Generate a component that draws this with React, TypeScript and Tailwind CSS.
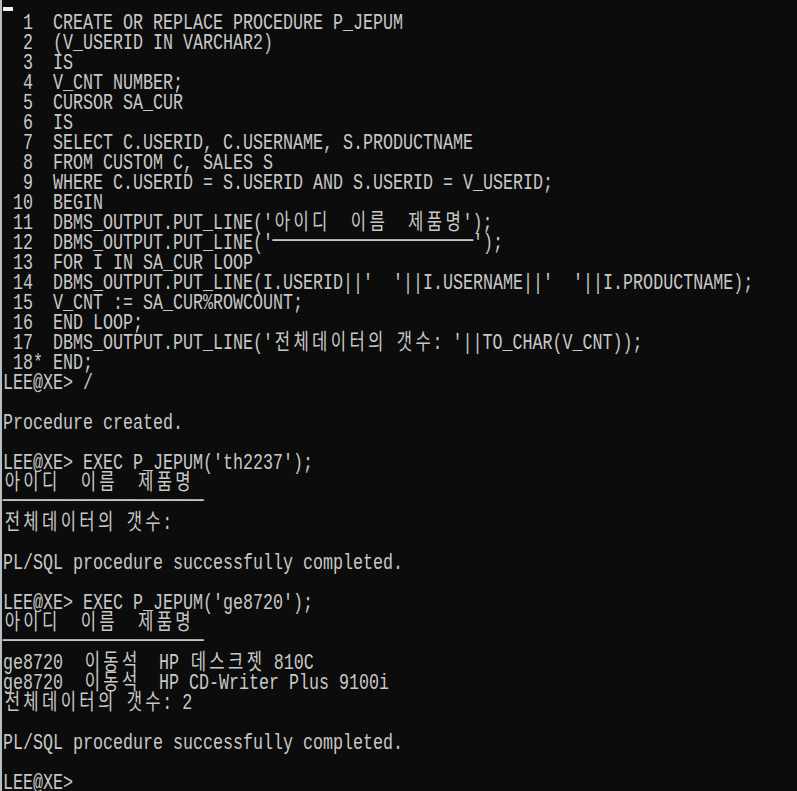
import React from "react";

const LINES: string[] = [
  "  1  CREATE OR REPLACE PROCEDURE P_JEPUM",
  "  2  (V_USERID IN VARCHAR2)",
  "  3  IS",
  "  4  V_CNT NUMBER;",
  "  5  CURSOR SA_CUR",
  "  6  IS",
  "  7  SELECT C.USERID, C.USERNAME, S.PRODUCTNAME",
  "  8  FROM CUSTOM C, SALES S",
  "  9  WHERE C.USERID = S.USERID AND S.USERID = V_USERID;",
  " 10  BEGIN",
  " 11  DBMS_OUTPUT.PUT_LINE('아이디  이름  제품명');",
  " 12  DBMS_OUTPUT.PUT_LINE('--------------------');",
  " 13  FOR I IN SA_CUR LOOP",
  " 14  DBMS_OUTPUT.PUT_LINE(I.USERID||'  '||I.USERNAME||'  '||I.PRODUCTNAME);",
  " 15  V_CNT := SA_CUR%ROWCOUNT;",
  " 16  END LOOP;",
  " 17  DBMS_OUTPUT.PUT_LINE('전체데이터의 갯수: '||TO_CHAR(V_CNT));",
  " 18* END;",
  "LEE@XE> /",
  "",
  "Procedure created.",
  "",
  "LEE@XE> EXEC P_JEPUM('th2237');",
  "아이디  이름  제품명",
  "--------------------",
  "전체데이터의 갯수:",
  "",
  "PL/SQL procedure successfully completed.",
  "",
  "LEE@XE> EXEC P_JEPUM('ge8720');",
  "아이디  이름  제품명",
  "--------------------",
  "ge8720  이동석  HP 데스크젯 810C",
  "ge8720  이동석  HP CD-Writer Plus 9100i",
  "전체데이터의 갯수: 2",
  "",
  "PL/SQL procedure successfully completed.",
  "",
  "LEE@XE>",
];

function renderLine(s: string) {
  const out: React.ReactNode[] = [];
  let buf = "";
  let k = 0;
  const chars = Array.from(s);
  const flush = () => {
    if (buf) {
      out.push(<React.Fragment key={k++}>{buf}</React.Fragment>);
      buf = "";
    }
  };
  chars.forEach((ch, i) => {
    if (/[\uAC00-\uD7A3]/.test(ch)) {
      flush();
      out.push(
        <span
          key={k++}
          className="font-['Noto_Sans_CJK_KR',sans-serif] text-[22px] leading-[0px] pl-[2.2px] tracking-[2.2px]"
        >
          {ch}
        </span>
      );
    } else if (ch === "-" && (chars[i - 1] === "-" || chars[i + 1] === "-")) {
      flush();
      out.push(
        <span
          key={k++}
          className="inline-block w-[13.2px] text-center scale-x-[2.4] -translate-y-[3px]"
        >
          -
        </span>
      );
    } else {
      buf += ch;
    }
  });
  flush();
  return out;
}

export default function App() {
  return (
    <div className="h-[791px] w-full overflow-hidden bg-[#0c0c0c] border-l-2 border-[#bdbdbd] pl-px text-[#c8c8c8]">
      <div className="h-[10px]">
        <div className="mt-[7px] h-[4px] w-[10px] bg-[#f2f2f2]" />
      </div>
      {LINES.map((l, i) => (
        <div
          key={i}
          className="h-5 whitespace-pre font-['Liberation_Mono',monospace] text-[22px] leading-[14px] origin-left scale-x-[0.7576]"
        >
          {renderLine(l)}
        </div>
      ))}
    </div>
  );
}
